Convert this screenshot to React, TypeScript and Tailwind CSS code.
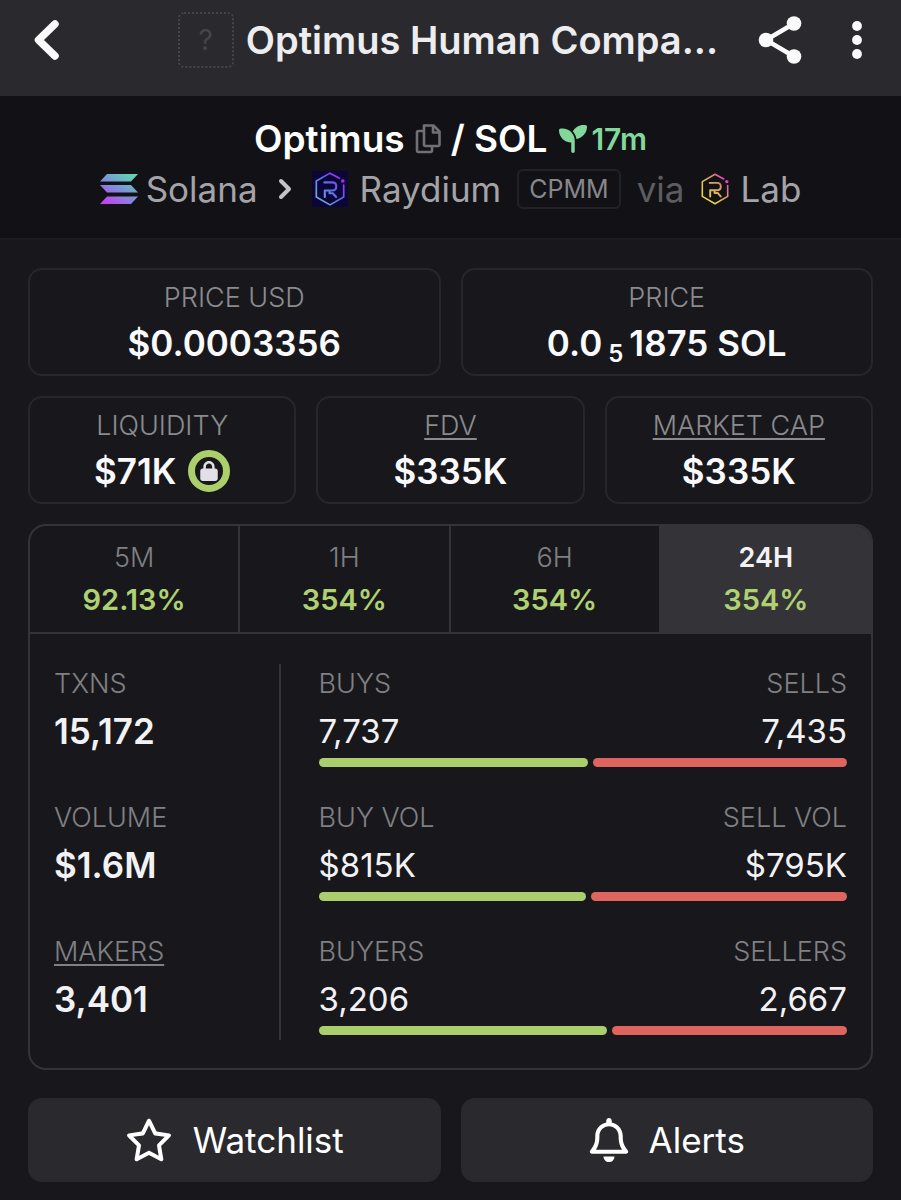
import { useState } from "react";
import { FaLock, FaRegBell, FaRegStar, FaSeedling } from "react-icons/fa6";

const tabs = [
  { label: "5M", change: "92.13%" },
  { label: "1H", change: "354%" },
  { label: "6H", change: "354%" },
  { label: "24H", change: "354%" },
];

const totals = [
  { label: "TXNS", value: "15,172" },
  { label: "VOLUME", value: "$1.6M" },
  { label: "MAKERS", value: "3,401", hint: true },
];

const splits = [
  { left: "BUYS", right: "SELLS", buy: "7,737", sell: "7,435", ratio: 7737 / 15172 },
  { left: "BUY VOL", right: "SELL VOL", buy: "$815K", sell: "$795K", ratio: 815 / 1610 },
  { left: "BUYERS", right: "SELLERS", buy: "3,206", sell: "2,667", ratio: 3206 / 5873 },
];

function SolanaLogo() {
  return (
    <svg viewBox="0 0 38 32" className="h-8 w-[38px]" aria-hidden="true">
      <defs>
        <linearGradient id="sol" gradientUnits="userSpaceOnUse" x1="30" y1="0" x2="10" y2="32">
          <stop offset="0" stopColor="#5fd6b0" />
          <stop offset="0.5" stopColor="#7a93d6" />
          <stop offset="1" stopColor="#c044f0" />
        </linearGradient>
      </defs>
      <path d="M7 1H38L31 8.500H0Z M0 12H31L38 19.500H7Z M7 23.500H38L31 31H0Z" fill="url(#sol)" />
    </svg>
  );
}

function RaydiumLogo({ id, from, to, dot }: { id: string; from: string; to: string; dot: string }) {
  return (
    <svg viewBox="0 0 32 36" className="h-full w-full" fill="none" aria-hidden="true">
      <defs>
        <linearGradient id={id} gradientUnits="userSpaceOnUse" x1="30" y1="8" x2="6" y2="28">
          <stop offset="0" stopColor={dot} />
          <stop offset="0.4" stopColor={from} />
          <stop offset="1" stopColor={to} />
        </linearGradient>
      </defs>
      <g stroke={`url(#${id})`} strokeWidth="1.800" strokeLinecap="round" strokeLinejoin="round">
        <path d="M26 6.500L16 1.200L1.500 9.500V26.500L16 34.800L30.500 26.500V14" />
        <path d="M10 11H18.500C24 11 24 19.500 18.500 19.500H10.500V26.500M15.500 20V22.500H19L22.500 26.500" strokeWidth="2.200" />
      </g>
      <circle cx="29.500" cy="9.500" r="1.900" fill={dot} />
    </svg>
  );
}

function CopyIcon() {
  return (
    <svg viewBox="0 0 26 30" className="h-[30px] w-[26px]" fill="none" stroke="currentColor" strokeWidth="2.600" strokeLinejoin="round" aria-hidden="true">
      <path d="M9 1.500H18.500L24.500 7.500V20.500Q24.500 22 23 22H10.500Q9 22 9 20.500Z" />
      <path d="M18 2V8.500H24.500" />
      <path d="M9 7H3.500Q2 7 2 8.500V26.500Q2 28 3.500 28H15.500Q17 28 17 26.500V22" />
    </svg>
  );
}

function ShareIcon() {
  return (
    <svg viewBox="0 0 44 48" className="h-12 w-11" fill="currentColor" aria-hidden="true">
      <path d="M36 7.500L8 24L36 40.500" fill="none" stroke="currentColor" strokeWidth="4.500" />
      <circle cx="36" cy="7.500" r="7.300" />
      <circle cx="8" cy="24" r="7.300" />
      <circle cx="36" cy="40.500" r="7.300" />
    </svg>
  );
}

function StatCard({ label, hint, children }: { label: string; hint?: boolean; children: React.ReactNode }) {
  return (
    <div className="rounded-[14px] border-2 border-[#27272b] pt-2.5 pb-1 text-center">
      <div className="text-[27px] leading-9 font-light text-[#8b8b8f]">
        {hint ? <span className="underline decoration-2 underline-offset-3">{label}</span> : label}
      </div>
      <div className="flex items-center justify-center text-[35px] leading-[54px] font-semibold text-[#fafafc]">{children}</div>
    </div>
  );
}

export default function App() {
  const [active, setActive] = useState("24H");

  return (
    <div className="min-h-screen bg-[#18181c] font-['Inter',sans-serif] text-[#f2f2f4]">
      <header className="flex h-24 items-center bg-[#2a2a2e] pr-[39px] pb-4 pl-[34px] text-[#fafafc]">
        <button aria-label="Back">
          <svg viewBox="0 0 26 42" className="h-[42px] w-[26px]" fill="none" stroke="currentColor" strokeWidth="7.500" strokeLinecap="round" strokeLinejoin="round" aria-hidden="true">
            <path d="M21 5L4.500 21L21 37" />
          </svg>
        </button>
        <div className="ml-auto flex items-center gap-3">
          <div className="flex size-14 items-center justify-center rounded-md border-2 border-dotted border-[#454549] text-[28px] text-[#454549]">?</div>
          <h1 className="text-[38px] leading-12 font-semibold whitespace-nowrap text-[#ededf0]">Optimus Human Compa...</h1>
        </div>
        <button aria-label="Share" className="ml-10">
          <ShareIcon />
        </button>
        <button aria-label="More options" className="ml-[50px]">
          <svg viewBox="0 0 10 38" className="h-[38px] w-2.5" fill="currentColor" aria-hidden="true">
            <circle cx="5" cy="5" r="4.900" />
            <circle cx="5" cy="19" r="4.900" />
            <circle cx="5" cy="33" r="4.900" />
          </svg>
        </button>
      </header>

      <section className="border-b-2 border-[#1d1d21] bg-[#121216] pt-4 pb-[26px]">
        <div className="flex items-center justify-center text-[37px] leading-[54px] font-semibold text-white">
          <span>Optimus</span>
          <button aria-label="Copy address" className="mx-2.5 text-[#717175]">
            <CopyIcon />
          </button>
          <span>/ SOL</span>
          <span className="ml-3 flex items-center gap-1 text-[30px] font-semibold text-[#82d89b]">
            <FaSeedling className="size-7" />
            17m
          </span>
        </div>
        <div className="flex items-center justify-center text-[35px] leading-[46px] text-[#a4a4a8]">
          <a href="#solana" className="flex items-center gap-2">
            <SolanaLogo />
            Solana
          </a>
          <svg viewBox="0 0 14 22" className="mx-5 h-[22px] w-3.5" fill="none" stroke="#c4c4c8" strokeWidth="4" strokeLinecap="round" strokeLinejoin="round" aria-hidden="true">
            <path d="M3 3L11 11L3 19" />
          </svg>
          <a href="#raydium" className="flex items-center gap-3">
            <span className="size-9 bg-[#0c0638] p-px">
              <RaydiumLogo id="ray" from="#5a62e8" to="#67a9d8" dot="#b02af0" />
            </span>
            Raydium
          </a>
          <span className="ml-4 rounded-md border-2 border-[#222226] px-2.5 text-[25px] leading-9 text-[#87878b]">CPMM</span>
          <span className="ml-4 text-[#5d5d61]">via</span>
          <a href="#lab" className="ml-4 flex items-center gap-3">
            <span className="h-8 w-7">
              <RaydiumLogo id="lab" from="#d3a062" to="#e6d548" dot="#e83fc4" />
            </span>
            Lab
          </a>
        </div>
      </section>

      <main className="flex flex-col gap-5 px-7 pt-7 pb-4">
        <div className="grid grid-cols-2 gap-5">
          <StatCard label="PRICE USD">$0.0003356</StatCard>
          <StatCard label="PRICE">
            <span>
              0.0<sub className="mx-1.5 text-[24px]">5</sub>1875 SOL
            </span>
          </StatCard>
        </div>
        <div className="grid grid-cols-3 gap-5">
          <StatCard label="LIQUIDITY">
            $71K
            <span className="ml-3 flex size-[42px] items-center justify-center rounded-full border-[7px] border-[#abd06b] text-[#e2dfe6]">
              <FaLock className="size-5" />
            </span>
          </StatCard>
          <StatCard label="FDV" hint>
            $335K
          </StatCard>
          <StatCard label="MARKET CAP" hint>
            $335K
          </StatCard>
        </div>

        <div className="overflow-hidden rounded-[18px] border-2 border-[#343438]">
          <div className="grid grid-cols-4 divide-x-2 divide-[#343438] border-b-2 border-[#343438]" role="tablist">
            {tabs.map((tab) => (
              <button
                key={tab.label}
                role="tab"
                aria-selected={active === tab.label}
                onClick={() => setActive(tab.label)}
                className={`pt-3.5 pb-2 ${active === tab.label ? "bg-[#343438]" : ""}`}
              >
                <span className={`block text-[27px] leading-9 ${active === tab.label ? "font-semibold text-[#f2f2f4]" : "font-light text-[#808084]"}`}>
                  {tab.label}
                </span>
                <span className="block text-[29px] leading-12 font-semibold text-[#b0d172]">{tab.change}</span>
              </button>
            ))}
          </div>

          <div className="grid grid-cols-[2fr_5fr] px-6 pt-[30px] pb-7">
            <div className="flex flex-col gap-10 border-r-2 border-[#343438]">
              {totals.map((t) => (
                <div key={t.label}>
                  <div className="text-[27px] leading-10 font-light text-[#808084]">
                    {t.hint ? <span className="underline decoration-2 underline-offset-3">{t.label}</span> : t.label}
                  </div>
                  <div className="text-[35px] leading-[54px] font-semibold">{t.value}</div>
                </div>
              ))}
            </div>
            <div className="flex flex-col gap-[31px] pb-[5px] pl-[38px]">
              {splits.map((s) => (
                <div key={s.left}>
                  <div className="flex justify-between text-[27px] leading-10 font-light text-[#808084]">
                    <span>{s.left}</span>
                    <span>{s.right}</span>
                  </div>
                  <div className="flex justify-between text-[33px] leading-[54px]">
                    <span>{s.buy}</span>
                    <span>{s.sell}</span>
                  </div>
                  <div className="flex h-[9px] gap-[5px]">
                    <div className="rounded-full bg-[#abce6c]" style={{ width: `${s.ratio * 100}%` }} />
                    <div className="flex-1 rounded-full bg-[#df645e]" />
                  </div>
                </div>
              ))}
            </div>
          </div>
        </div>

        <div className="mt-2 grid grid-cols-2 gap-5">
          <button className="flex h-[84px] items-center justify-center gap-5 rounded-[14px] bg-[#2a2a2e] text-[35px] text-white">
            <FaRegStar className="h-11 w-12" />
            Watchlist
          </button>
          <button className="flex h-[84px] items-center justify-center gap-5 rounded-[14px] bg-[#2a2a2e] text-[35px] text-white">
            <FaRegBell className="h-11 w-10" />
            Alerts
          </button>
        </div>
      </main>
    </div>
  );
}
